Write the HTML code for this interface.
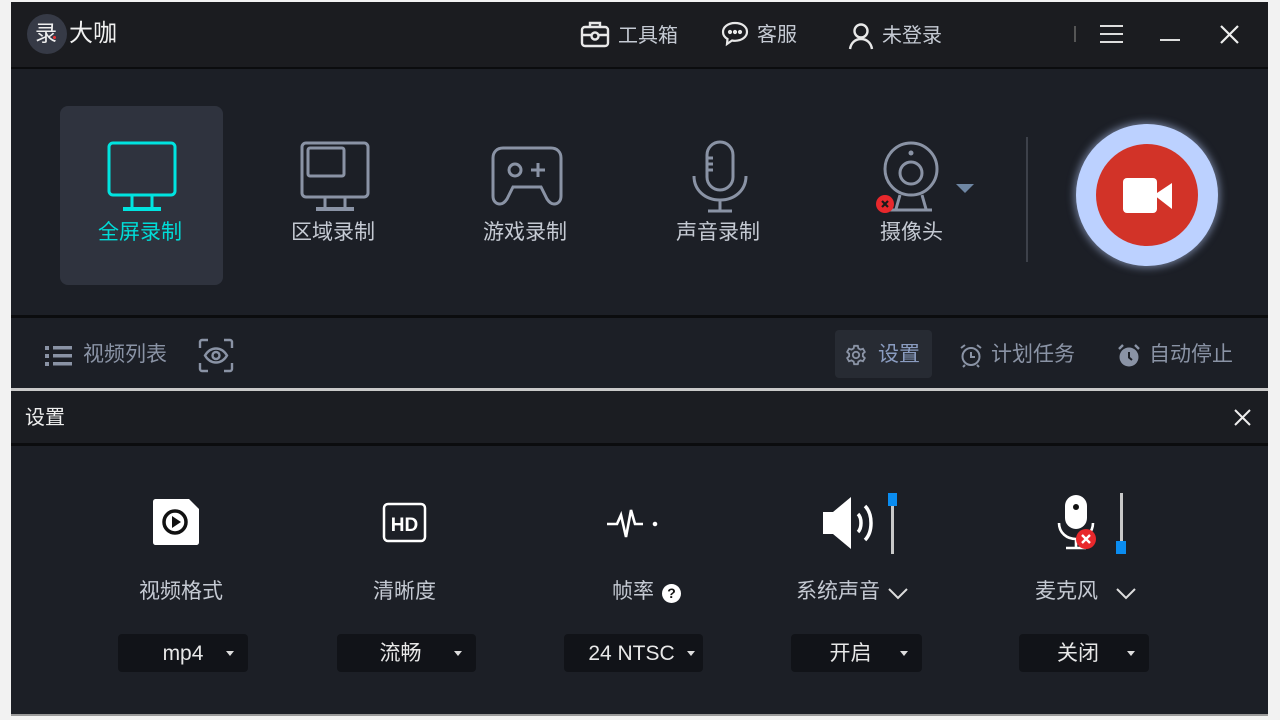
<!DOCTYPE html>
<html><head><meta charset="utf-8"><style>
*{margin:0;padding:0;box-sizing:border-box}
body{width:1280px;height:720px;background:#f2f2f2;position:relative;overflow:hidden;font-family:"Liberation Sans","Noto Sans CJK SC",sans-serif;color:#c5cad3}
.a{position:absolute}
.win{left:11px;top:2px;width:1257px;height:714px;background:#1c1f26}
.t{position:absolute;white-space:nowrap}
.dd{position:absolute;top:634px;height:38px;background:#111318;border-radius:4px;color:#e8e8e8;font-size:21px;line-height:40px}
.dd .v{position:absolute;left:0;right:12px;text-align:center}
.dd .c{position:absolute;right:14px;top:17px;border-left:4px solid transparent;border-right:4px solid transparent;border-top:5px solid #ddd}
</style></head><body>
<div class="a win"></div>
<div class="a" style="left:11px;top:2px;width:1257px;height:65px;background:#1b1c20"></div>
<div class="a" style="left:11px;top:67px;width:1257px;height:2px;background:#0b0c0e"></div>
<div class="a" style="left:27px;top:14px;width:40px;height:40px;border-radius:50%;background:#363a46"></div>
<div class="t" style="left:35px;top:20px;font-size:22px;color:#eee;line-height:28px">录</div>
<div class="a" style="left:53px;top:36px;width:3px;height:3px;background:#e33;border-radius:50%"></div>
<div class="t" style="left:69px;top:19px;font-size:24px;color:#f0f0f0;line-height:30px">大咖</div>
<svg class="a" style="left:580px;top:20px" width="30" height="28" viewBox="0 0 30 28" fill="none" stroke="#e8e8e8" stroke-width="2.4"><rect x="2" y="7" width="26" height="19" rx="3"/><path d="M10 7V3h10v4M2 15h26"/><circle cx="15" cy="16" r="3.5" fill="#1b1c20"/></svg>
<div class="t" style="left:618px;top:22px;font-size:20px;line-height:28px">工具箱</div>
<svg class="a" style="left:721px;top:21px" width="28" height="26" viewBox="0 0 28 26" fill="none" stroke="#e8e8e8" stroke-width="2.2"><path d="M14 2C7 2 2 6 2 11c0 3 2 5.5 4.5 7L6 23l5-3.5c1 .2 2 .3 3 .3 7 0 12-4 12-9S21 2 14 2z"/><circle cx="9" cy="11" r="1" fill="#e8e8e8"/><circle cx="14" cy="11" r="1" fill="#e8e8e8"/><circle cx="19" cy="11" r="1" fill="#e8e8e8"/></svg>
<div class="t" style="left:757px;top:21px;font-size:20px;line-height:28px">客服</div>
<svg class="a" style="left:848px;top:22px" width="26" height="28" viewBox="0 0 26 28" fill="none" stroke="#e8e8e8" stroke-width="2.4"><circle cx="13" cy="9" r="6.5"/><path d="M2 27c1-6 5-10 11-10s10 4 11 10"/></svg>
<div class="t" style="left:882px;top:22px;font-size:20px;line-height:28px">未登录</div>
<div class="a" style="left:1074px;top:26px;width:2px;height:16px;background:#555"></div>
<div class="a" style="left:1100px;top:25px;width:23px;height:2px;background:#ddd;box-shadow:0 8px 0 #ddd,0 16px 0 #ddd"></div>
<div class="a" style="left:1160px;top:39px;width:20px;height:2px;background:#ddd"></div>
<svg class="a" style="left:1219px;top:24px" width="21" height="21" viewBox="0 0 21 21" stroke="#eee" stroke-width="2.2"><path d="M2 2l17 17M19 2L2 19"/></svg>
<div class="a" style="left:60px;top:106px;width:163px;height:179px;background:#2f333e;border-radius:8px"></div>
<svg class="a" style="left:106px;top:141px" width="72" height="72" viewBox="0 0 72 72" fill="none" stroke="#00e4e0" stroke-width="3"><rect x="3" y="2" width="66" height="52" rx="4"/><path d="M26 54v14M46 54v14"/><path d="M17 68h38" stroke-width="4"/></svg>
<div class="t" style="left:98px;top:219px;font-size:21px;color:#00dcd8;line-height:28px">全屏录制</div>
<svg class="a" style="left:299px;top:141px" width="72" height="72" viewBox="0 0 72 72" fill="none" stroke="#8a93a5" stroke-width="3"><rect x="3" y="2" width="66" height="54" rx="4"/><rect x="9" y="7" width="36" height="28" rx="2"/><path d="M26 56v12M46 56v12"/><path d="M17 68h38" stroke-width="4"/></svg>
<div class="t" style="left:291px;top:219px;font-size:21px;line-height:28px">区域录制</div>
<svg class="a" style="left:491px;top:146px" width="72" height="62" viewBox="0 0 72 62" fill="none" stroke="#8a93a5" stroke-width="3"><path d="M12 2h48c6 0 10 4 10 10v38c0 5-3 8-7 8-3 0-5-2-7-5l-6-12H22l-6 12c-2 3-4 5-7 5-4 0-7-3-7-8V12C2 6 6 2 12 2z"/><circle cx="24" cy="24" r="6"/><path d="M40 24h14M47 17v14"/></svg>
<div class="t" style="left:483px;top:219px;font-size:21px;line-height:28px">游戏录制</div>
<svg class="a" style="left:690px;top:140px" width="60" height="74" viewBox="0 0 60 74" fill="none" stroke="#8a93a5" stroke-width="3"><rect x="17" y="2" width="26" height="48" rx="13"/><path d="M17 18h6M17 24h6M17 30h6"/><path d="M4 36c0 14 11 24 26 24s26-10 26-24M30 60v10M18 71h24"/></svg>
<div class="t" style="left:676px;top:219px;font-size:21px;line-height:28px">声音录制</div>
<svg class="a" style="left:880px;top:140px" width="62" height="74" viewBox="0 0 62 74" fill="none" stroke="#8a93a5" stroke-width="3"><circle cx="31" cy="29" r="26"/><circle cx="31" cy="33" r="11"/><circle cx="31" cy="13" r="2.5" fill="#8a93a5" stroke="none"/><path d="M20 55l-4 14M42 55l4 14M10 70h42"/></svg>
<div class="a" style="left:876px;top:195px;width:18px;height:18px;border-radius:50%;background:#e8282c"></div>
<svg class="a" style="left:876px;top:195px" width="18" height="18" stroke="#1a1a1a" stroke-width="2.2"><path d="M6 6l6 6M12 6l-6 6"/></svg>
<div class="a" style="left:956px;top:184px;border-left:9px solid transparent;border-right:9px solid transparent;border-top:9px solid #6e86a3"></div>
<div class="t" style="left:880px;top:219px;font-size:21px;line-height:28px">摄像头</div>
<div class="a" style="left:1026px;top:137px;width:2px;height:125px;background:#3d414a"></div>
<div class="a" style="left:1076px;top:124px;width:142px;height:142px;border-radius:50%;background:#bcd1ff;box-shadow:0 0 8px 2px rgba(190,210,255,.5)"></div>
<div class="a" style="left:1096px;top:144px;width:102px;height:102px;border-radius:50%;background:#d23328"></div>
<svg class="a" style="left:1123px;top:178px" width="50" height="36" viewBox="0 0 50 36" fill="#fff"><rect x="0" y="0" width="34" height="35" rx="4"/><path d="M31 17L49 5v26z"/></svg>
<div class="a" style="left:11px;top:315px;width:1257px;height:3px;background:#0b0c0e"></div>
<svg class="a" style="left:45px;top:345px" width="28" height="22" fill="#8a93a5"><rect x="0" y="1" width="4" height="4"/><rect x="8" y="1" width="19" height="3.5"/><rect x="0" y="9" width="4" height="4"/><rect x="8" y="9" width="19" height="3.5"/><rect x="0" y="17" width="4" height="4"/><rect x="8" y="17" width="19" height="3.5"/></svg>
<div class="t" style="left:83px;top:341px;font-size:21px;color:#8a93a5;line-height:28px">视频列表</div>
<svg class="a" style="left:198px;top:338px" width="36" height="35" viewBox="0 0 36 35" fill="none" stroke="#8a93a5" stroke-width="2.4"><path d="M2 10V4c0-1 1-2 2-2h6M26 2h6c1 0 2 1 2 2v6M34 25v6c0 1-1 2-2 2h-6M10 33H4c-1 0-2-1-2-2v-6"/><path d="M7 17.5c3-5 7-7 11-7s8 2 11 7c-3 5-7 7-11 7s-8-2-11-7z"/><circle cx="18" cy="17.5" r="3.5"/></svg>
<div class="a" style="left:835px;top:330px;width:97px;height:48px;background:#272b33;border-radius:4px"></div>
<svg class="a" style="left:845px;top:344px" width="22" height="22" viewBox="0 0 24 24" fill="none" stroke="#8a93a5" stroke-width="2"><circle cx="12" cy="12" r="3.5"/><path d="M10 2h4l.6 2.8 2.3 1.3 2.7-.9 2 3.5-2.1 1.9v2.8l2.1 1.9-2 3.5-2.7-.9-2.3 1.3L14 22h-4l-.6-2.8-2.3-1.3-2.7.9-2-3.5 2.1-1.9v-2.8L2.4 8.7l2-3.5 2.7.9 2.3-1.3z"/></svg>
<div class="t" style="left:878px;top:341px;font-size:21px;color:#8a9cc0;line-height:28px">设置</div>
<svg class="a" style="left:959px;top:343px" width="24" height="25" viewBox="0 0 24 25" fill="none" stroke="#8a93a5" stroke-width="2"><circle cx="12" cy="13.5" r="8.5"/><path d="M12 9v5h4M2 5l4-3M22 5l-4-3M6 22l-2 2M18 22l2 2"/></svg>
<div class="t" style="left:991px;top:341px;font-size:21px;color:#8a93a5;line-height:28px">计划任务</div>
<svg class="a" style="left:1117px;top:343px" width="24" height="25" viewBox="0 0 24 25"><circle cx="12" cy="14" r="9.5" fill="#8a93a5"/><path d="M12 9v5.5l3 2.5" stroke="#1c1f26" stroke-width="2" fill="none"/><path d="M2 6l4-4M22 6l-4-4" stroke="#8a93a5" stroke-width="2.4"/></svg>
<div class="t" style="left:1149px;top:341px;font-size:21px;color:#8a93a5;line-height:28px">自动停止</div>
<div class="a" style="left:11px;top:388px;width:1257px;height:3px;background:#c9c9c9"></div>
<div class="a" style="left:11px;top:391px;width:1257px;height:52px;background:#1b1d22"></div>
<div class="t" style="left:25px;top:404px;font-size:20px;color:#eee;line-height:28px">设置</div>
<svg class="a" style="left:1234px;top:409px" width="17" height="17" stroke="#eee" stroke-width="2"><path d="M1 1l15 15M16 1L1 16"/></svg>
<div class="a" style="left:11px;top:443px;width:1257px;height:3px;background:#0b0c0e"></div>
<svg class="a" style="left:153px;top:499px" width="46" height="46" viewBox="0 0 46 46"><path d="M3 0h33l10 10v33c0 2-1 3-3 3H3c-2 0-3-1-3-3V3c0-2 1-3 3-3z" fill="#fff"/><circle cx="22" cy="23" r="11" fill="none" stroke="#111" stroke-width="3.5"/><path d="M19 17v12l9-6z" fill="#111"/></svg>
<svg class="a" style="left:382px;top:502px" width="46" height="42" viewBox="0 0 46 42"><rect x="2" y="2" width="41" height="37" rx="4" fill="none" stroke="#fff" stroke-width="2.5"/><text x="22.5" y="29" text-anchor="middle" font-family="Liberation Sans" font-weight="bold" font-size="19" fill="#fff">HD</text></svg>
<svg class="a" style="left:605px;top:506px" width="54" height="34" viewBox="0 0 54 34" fill="none" stroke="#fff" stroke-width="2.6"><path d="M2 18h10l4-9 5 22 5-27 4 14h8"/><circle cx="50" cy="18" r="1" fill="#fff"/></svg>
<svg class="a" style="left:820px;top:494px" width="60" height="58" viewBox="0 0 60 58"><path d="M3 18h10L31 3v52L13 40H3z" fill="#fff"/><path d="M38 20c4 4 4 14 0 18M45 12c8 8 8 26 0 34" fill="none" stroke="#fff" stroke-width="3.5"/></svg>
<div class="a" style="left:891px;top:500px;width:3px;height:54px;background:#c8c8c8"></div>
<div class="a" style="left:888px;top:493px;width:9px;height:13px;background:#0a8cf0"></div>
<svg class="a" style="left:1056px;top:493px" width="46" height="60" viewBox="0 0 46 60"><rect x="9" y="2" width="22" height="34" rx="11" fill="#fff"/><circle cx="20" cy="14" r="3" fill="#111"/><path d="M3 30c0 10 8 16 17 16s17-6 17-16M20 46v8M10 55h20" fill="none" stroke="#fff" stroke-width="2.6"/><circle cx="30" cy="46" r="10" fill="#e8282c"/><path d="M26 42l8 8M34 42l-8 8" stroke="#fff" stroke-width="2.4"/></svg>
<div class="a" style="left:1120px;top:493px;width:3px;height:54px;background:#c8c8c8"></div>
<div class="a" style="left:1116px;top:541px;width:10px;height:13px;background:#0a8cf0"></div>
<div class="t" style="left:139px;top:578px;font-size:21px;line-height:28px">视频格式</div>
<div class="t" style="left:373px;top:578px;font-size:21px;line-height:28px">清晰度</div>
<div class="t" style="left:612px;top:578px;font-size:21px;line-height:28px">帧率</div>
<div class="a" style="left:662px;top:584px;width:19px;height:19px;border-radius:50%;background:#fff;color:#111;font-size:14px;font-weight:bold;text-align:center;line-height:19px">?</div>
<div class="t" style="left:796px;top:578px;font-size:21px;line-height:28px">系统声音</div>
<svg class="a" style="left:887px;top:587px" width="22" height="14" fill="none" stroke="#ddd" stroke-width="2"><path d="M2 2l9 9 9-9"/></svg>
<div class="t" style="left:1035px;top:578px;font-size:21px;line-height:28px">麦克风</div>
<svg class="a" style="left:1115px;top:587px" width="22" height="14" fill="none" stroke="#ddd" stroke-width="2"><path d="M2 2l9 9 9-9"/></svg>
<div class="dd" style="left:118px;width:130px"><span class="v" style="right:0">mp4</span><span class="c"></span></div>
<div class="dd" style="left:337px;width:139px"><span class="v">流畅</span><span class="c"></span></div>
<div class="dd" style="left:564px;width:139px"><span class="v" style="right:4px">24 NTSC</span><span class="c" style="right:8px"></span></div>
<div class="dd" style="left:791px;width:131px"><span class="v">开启</span><span class="c"></span></div>
<div class="dd" style="left:1019px;width:130px"><span class="v">关闭</span><span class="c"></span></div>
<div class="a" style="left:11px;top:714px;width:1257px;height:2px;background:#9a9a9a"></div>
</body></html>
